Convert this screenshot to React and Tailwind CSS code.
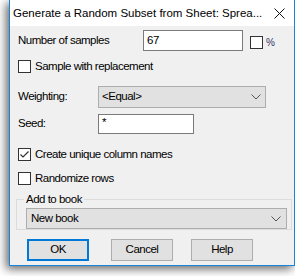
import React from "react";

function Check({ checked }) {
  return (
    <div className="w-[13px] h-[13px] border border-[#333333] bg-white shrink-0 flex items-center justify-center">
      {checked && (
        <svg width="11" height="11" viewBox="0 0 11 11">
          <path d="M1.5 5.5 L4 8 L9.5 2.5" fill="none" stroke="#333" strokeWidth="1.2" />
        </svg>
      )}
    </div>
  );
}

function Chevron() {
  return (
    <svg width="10" height="6" viewBox="0 0 10 6" className="shrink-0">
      <path d="M0.5 0.5 L5 5 L9.5 0.5" fill="none" stroke="#555" strokeWidth="1" />
    </svg>
  );
}

function Btn({ children, primary, className = "" }) {
  return (
    <div
      className={`w-[62px] h-[22px] flex items-center justify-center bg-[#e1e1e1] ${
        primary ? "border-2 border-[#0078d7]" : "border border-[#adadad]"
      } ${className}`}
    >
      {children}
    </div>
  );
}

export default function App() {
  return (
    <div
      className="w-[295px] h-[276px] bg-white overflow-hidden text-[11.5px] tracking-[-0.5px] text-black"
      style={{ fontFamily: '"Liberation Sans", Arial, sans-serif' }}
    >
      <div className="ml-[9px] w-[286px] h-[266px] flex flex-col border-x border-b border-[#1883d7] bg-white shadow-[-3px_3px_9px_rgba(0,0,0,0.6)]">
        {/* Title bar */}
        <div className="h-[26px] flex items-center pl-[3px] pr-[9px] bg-white">
          <div className="flex-1 leading-none pt-[2px] text-[11.5px] tracking-normal">
            Generate a Random Subset from Sheet: Sprea...
          </div>
          <svg width="11" height="11" viewBox="0 0 11 11">
            <path d="M0.5 0.5 L10.5 10.5 M10.5 0.5 L0.5 10.5" stroke="#111" strokeWidth="1" />
          </svg>
        </div>
        {/* Body */}
        <div className="flex-1 bg-[#f0f0f0] flex flex-col pt-[4px]">
          <div className="h-[21px] flex items-center pl-[8px]">
            <div className="w-[125px]">Number of samples</div>
            <div className="w-[100px] h-[21px] bg-white border border-[#7a7a7a] flex items-center pl-[3px]">
              67
            </div>
            <div className="ml-[7px] mt-[4px]">
              <Check />
            </div>
            <div className="ml-[3px] mt-[3px] text-[10px] tracking-normal text-[#333366]">%</div>
          </div>

          <div className="h-[13px] mt-[9px] flex items-center pl-[8px]">
            <Check />
            <div className="ml-[4px]">Sample with replacement</div>
          </div>

          <div className="h-[22px] mt-[13px] flex items-center pl-[8px]">
            <div className="w-[80px]">Weighting:</div>
            <div className="w-[168px] h-[22px] bg-[#e1e1e1] border border-[#adadad] flex items-center pl-[3px] pr-[4px]">
              <div className="flex-1">&lt;Equal&gt;</div>
              <Chevron />
            </div>
          </div>

          <div className="h-[20px] mt-[6px] flex items-center pl-[8px]">
            <div className="w-[80px]">Seed:</div>
            <div className="w-[96px] h-[20px] bg-white border border-[#7a7a7a] flex items-start pl-[3px] leading-none pt-[2px]">
              *
            </div>
          </div>

          <div className="h-[13px] mt-[14px] flex items-center pl-[8px]">
            <Check checked />
            <div className="ml-[4px]">Create unique column names</div>
          </div>

          <div className="h-[13px] mt-[11px] flex items-center pl-[8px]">
            <Check />
            <div className="ml-[4px]">Randomize rows</div>
          </div>

          <div className="relative ml-[6px] mt-[14px] w-[276px] h-[31px] border border-[#dcdcdc] pl-[9px] pt-[8px]">
            <div className="absolute left-[7px] top-[-8px] px-[2px] bg-[#f0f0f0] leading-[14px]">
              Add to book
            </div>
            <div className="w-[261px] h-[21px] bg-[#e1e1e1] border border-[#adadad] flex items-center pl-[4px] pr-[5px]">
              <div className="flex-1">New book</div>
              <Chevron />
            </div>
          </div>

          <div className="mt-[9px] flex pl-[17px]">
            <Btn primary>OK</Btn>
            <Btn className="ml-[22px]">Cancel</Btn>
            <Btn className="ml-[18px]">Help</Btn>
          </div>
        </div>
      </div>
    </div>
  );
}
